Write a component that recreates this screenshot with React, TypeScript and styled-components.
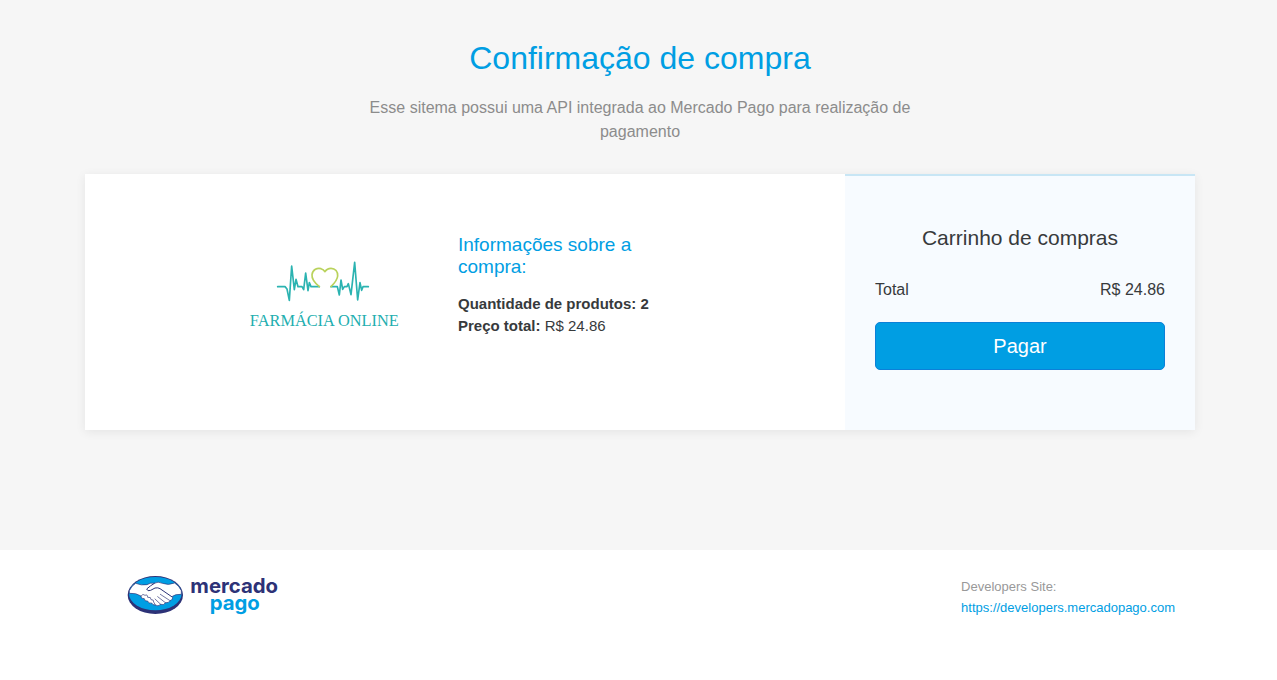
import React from "react";
import styled, { createGlobalStyle } from "styled-components";

const GlobalStyle = createGlobalStyle`
  *, *::before, *::after { box-sizing: border-box; }
  body {
    margin: 0;
    background: #fff;
    color: #373a3c;
    font-family: "Liberation Sans", Arial, sans-serif;
    font-size: 16px;
    line-height: 24px;
  }
  h1, h2, h3, p, dl, dd, dt { margin: 0; font-weight: 400; }
`;

const Hero = styled.main`
  background: #f6f6f6;
  padding: 39px 0 120px 3px;
`;

const Container = styled.div`
  max-width: 1140px;
  margin: 0 auto;
  padding: 0 15px;
`;

const Intro = styled.header`
  text-align: center;
  padding-bottom: 30px;
`;

const Title = styled.h1`
  color: #009ee3;
  font-size: 32px;
  line-height: 38px;
  margin-bottom: 19px;
`;

const Lead = styled.p`
  max-width: 600px;
  margin: 0 auto;
  color: #8c8c8c;
`;

const Card = styled.section`
  display: grid;
  grid-template-columns: minmax(0, 1fr) 350px;
  background: #fff;
  box-shadow: 0 2px 10px rgba(0, 0, 0, 0.075);

  @media (max-width: 800px) {
    grid-template-columns: 1fr;
  }
`;

const Product = styled.div`
  display: flex;
  justify-content: center;
  gap: 48px;
  padding: 60px 30px;
`;

const StoreLogo = styled.svg`
  flex: none;
  width: 170px;
  height: 90px;
  margin-top: 16px;
`;

const Info = styled.div`
  width: 232px;
`;

const InfoTitle = styled.h2`
  color: #009ee3;
  width: 190px;
  font-size: 19px;
  line-height: 22px;
  margin-bottom: 15px;
`;

const InfoLine = styled.p`
  font-size: 15px;
  line-height: 22px;
`;

const Summary = styled.aside`
  background: #f7fbff;
  border-top: 2px solid #c8e6f5;
  padding: 50px 30px 60px;
`;

const SummaryTitle = styled.h2`
  font-size: 21px;
  line-height: 24px;
  text-align: center;
  margin-bottom: 28px;
`;

const TotalRow = styled.dl`
  display: flex;
  justify-content: space-between;
  margin-bottom: 20px;
`;

const PayButton = styled.button`
  display: block;
  width: 100%;
  padding: 8px 16px;
  border: 1px solid #0c80d8;
  border-radius: 5px;
  background: #009ee3;
  color: #fff;
  font: 20px/30px "Liberation Sans", Arial, sans-serif;
  cursor: pointer;
`;

const Footer = styled.footer`
  padding: 15px 0 50px 3px;
`;

const FooterRow = styled(Container)`
  display: flex;
  justify-content: space-between;
`;

const BrandLogo = styled.svg`
  width: 170px;
  height: 60px;
  margin-left: 35px;
  flex: none;
`;

const Developers = styled.p`
  padding: 11px 20px 0 0;
  color: #999;
  font-size: 13px;
  line-height: 21px;
`;

const DevLink = styled.a`
  display: block;
  color: #009ee3;
  text-decoration: none;
`;

function FarmaciaLogo() {
  return (
    <StoreLogo viewBox="0 0 510 270" role="img" aria-label="Farmácia Online">
      <g fill="none" strokeWidth="5" strokeLinejoin="round" strokeLinecap="round">
        <g stroke="#2bb3b1">
          <path d="M113 110H135L141 117L148 151L155 48L163 119L168 88L174 110H186L191 119L197 69L204 122L208 98L213 110H238" />
          <path d="M273 110H292L298 135L303 90L308 118L313 110H321L325 101L333 134L344 37L353 150L360 98L365 121L369 110H385" />
        </g>
        <path
          stroke="#b9d25b"
          d="M238 110C223 98 215 85 216 74C218 58 232 53 243 56C249 58 253 62 255 65C258 60 264 55 273 55C286 55 294 65 293 78C292 91 282 101 273 110"
        />
      </g>
      <text
        x="253"
        y="227"
        fill="#22aeaf"
        fontFamily="Liberation Serif, Times New Roman, serif"
        fontSize="49"
        textAnchor="middle"
      >
        FARMÁCIA ONLINE
      </text>
    </StoreLogo>
  );
}

function MercadoPagoLogo() {
  return (
    <BrandLogo viewBox="0 0 510 180" role="img" aria-label="Mercado Pago">
      <ellipse cx="106" cy="90" rx="83" ry="57" fill="#2d3277" />
      <ellipse cx="106" cy="86" rx="79" ry="50" fill="#009ee3" />
      <path
        fill="#fff"
        stroke="#2d3277"
        strokeWidth="2"
        d="M28 77Q35 62 47 55Q64 62 81 59Q92 52 103 55Q114 48 127 55Q145 62 164 54Q178 63 184 77V88Q166 87 157 94Q160 104 150 107Q146 115 136 113Q132 122 122 118Q114 126 106 120Q98 121 95 114Q85 117 83 108Q73 110 73 101Q62 102 63 93Q48 83 28 85Z"
      />
      <g fill="none" stroke="#2d3277" strokeWidth="3" strokeLinecap="round" strokeLinejoin="round">
        <path d="M103 55Q91 62 80 72Q82 80 92 76L105 69Q114 67 120 71L155 95" />
        <path d="M121 88L150 107M113 95L136 113M105 102L122 118M63 93Q69 84 75 91Q83 87 83 97Q94 95 93 104Q102 103 101 111L106 120" strokeWidth="2" />
      </g>
      <g fontFamily="Inter, Open Sans, sans-serif" fontWeight="700" fontSize="61">
        <text x="211" y="83" fill="#2d3277">
          mercado
        </text>
        <text x="269" y="136" fill="#009ee3">
          pago
        </text>
      </g>
    </BrandLogo>
  );
}

export default function App() {
  return (
    <>
      <GlobalStyle />
      <Hero>
        <Container>
          <Intro>
            <Title>Confirmação de compra</Title>
            <Lead>
              Esse sitema possui uma API integrada ao Mercado Pago para realização de pagamento
            </Lead>
          </Intro>
          <Card>
            <Product>
              <FarmaciaLogo />
              <Info>
                <InfoTitle>Informações sobre a compra:</InfoTitle>
                <InfoLine>
                  <b>Quantidade de produtos: 2</b>
                </InfoLine>
                <InfoLine>
                  <b>Preço total:</b> R$ 24.86
                </InfoLine>
              </Info>
            </Product>
            <Summary>
              <SummaryTitle>Carrinho de compras</SummaryTitle>
              <TotalRow>
                <dt>Total</dt>
                <dd>R$ 24.86</dd>
              </TotalRow>
              <PayButton type="button">Pagar</PayButton>
            </Summary>
          </Card>
        </Container>
      </Hero>
      <Footer>
        <FooterRow>
          <MercadoPagoLogo />
          <Developers>
            Developers Site:
            <DevLink href="https://developers.mercadopago.com">
              https://developers.mercadopago.com
            </DevLink>
          </Developers>
        </FooterRow>
      </Footer>
    </>
  );
}
